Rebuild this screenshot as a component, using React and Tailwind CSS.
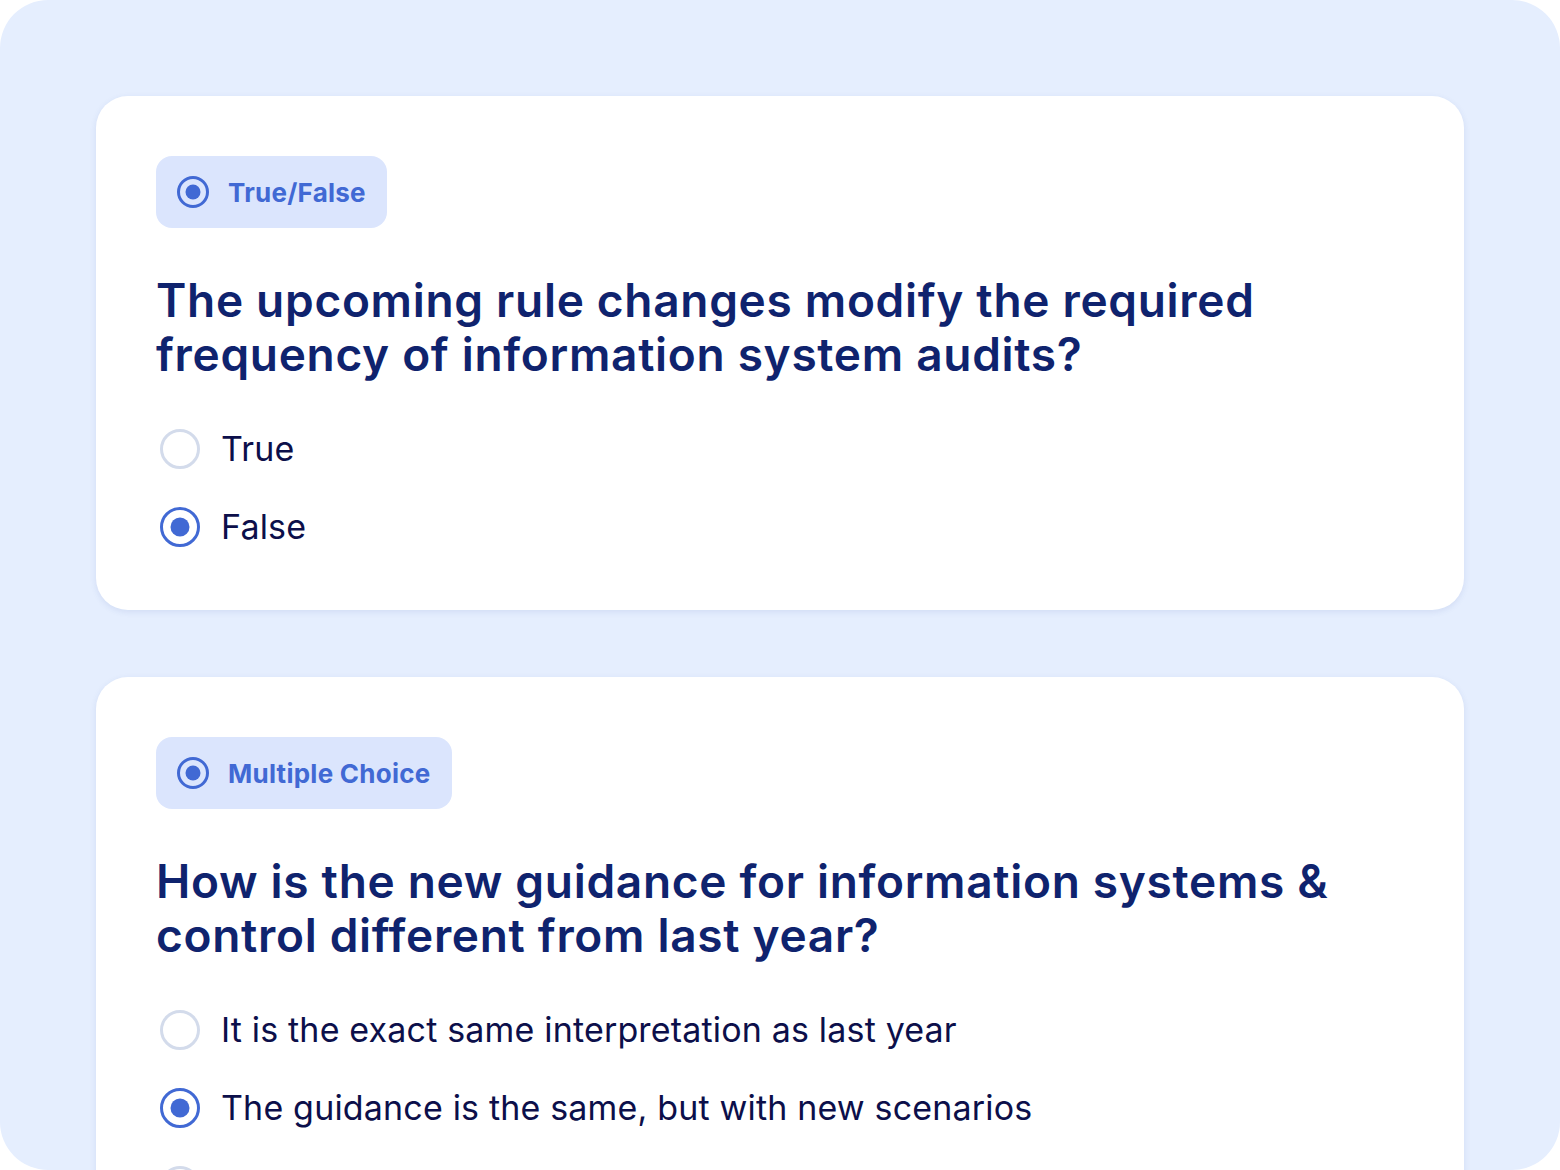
import React from 'react'

const questions = [
  {
    type: 'True/False',
    title: ['The upcoming rule changes modify the required', 'frequency of information system audits?'],
    options: ['True', 'False'],
    selected: 1,
  },
  {
    type: 'Multiple Choice',
    title: ['How is the new guidance for information systems &', 'control different from last year?'],
    options: [
      'It is the exact same interpretation as last year',
      'The guidance is the same, but with new scenarios',
      'The guidance has changed significantly',
    ],
    selected: 1,
  },
]

function BadgeIcon() {
  return (
    <svg width="32" height="32" viewBox="0 0 32 32" fill="none">
      <circle cx="16" cy="16" r="14.5" stroke="#4169d4" strokeWidth="3" />
      <circle cx="16" cy="16" r="7.5" fill="#4169d4" />
    </svg>
  )
}

function Radio({ checked }) {
  return (
    <svg width="40" height="40" viewBox="0 0 40 40" fill="none" className="shrink-0">
      <circle cx="20" cy="20" r="18.5" stroke={checked ? '#4169d4' : '#d3dbeb'} strokeWidth="3" />
      {checked && <circle cx="20" cy="20" r="9.5" fill="#4169d4" />}
    </svg>
  )
}

function QuestionCard({ q }) {
  return (
    <div className="bg-white rounded-[32px] p-[60px] shadow-[0_2px_6px_rgba(40,70,160,0.10)]">
      <div className="inline-flex items-center gap-[19px] h-[72px] pl-[21px] pr-[21px] rounded-[16px] bg-[#dbe5fd]">
        <BadgeIcon />
        <span className="text-[26px] font-bold text-[#4169d4] tracking-[0.01em]">{q.type}</span>
      </div>
      <h2 className="mt-[45px] text-[46px] leading-[54px] font-semibold text-[#0f236e] tracking-[0.7px] whitespace-nowrap">
        {q.title[0]}
        <br />
        {q.title[1]}
      </h2>
      <div className="mt-[45px] flex flex-col gap-[32px]">
        {q.options.map((o, i) => (
          <div key={o} className="flex items-center h-[46px] pl-[4px] gap-[21px]">
            <Radio checked={i === q.selected} />
            <span className="text-[34px] leading-[46px] text-[#0c0f4a] tracking-[0.005em]">{o}</span>
          </div>
        ))}
      </div>
    </div>
  )
}

export default function App() {
  return (
    <div className="w-[1560px] h-[1170px] bg-white" style={{ fontFamily: 'Inter, "Noto Sans", sans-serif' }}>
      <div className="h-full rounded-[48px] bg-[#e5eefe] px-[96px] pt-[96px] flex flex-col gap-[67px]">
        {questions.map(q => (
          <QuestionCard key={q.type} q={q} />
        ))}
      </div>
    </div>
  )
}
